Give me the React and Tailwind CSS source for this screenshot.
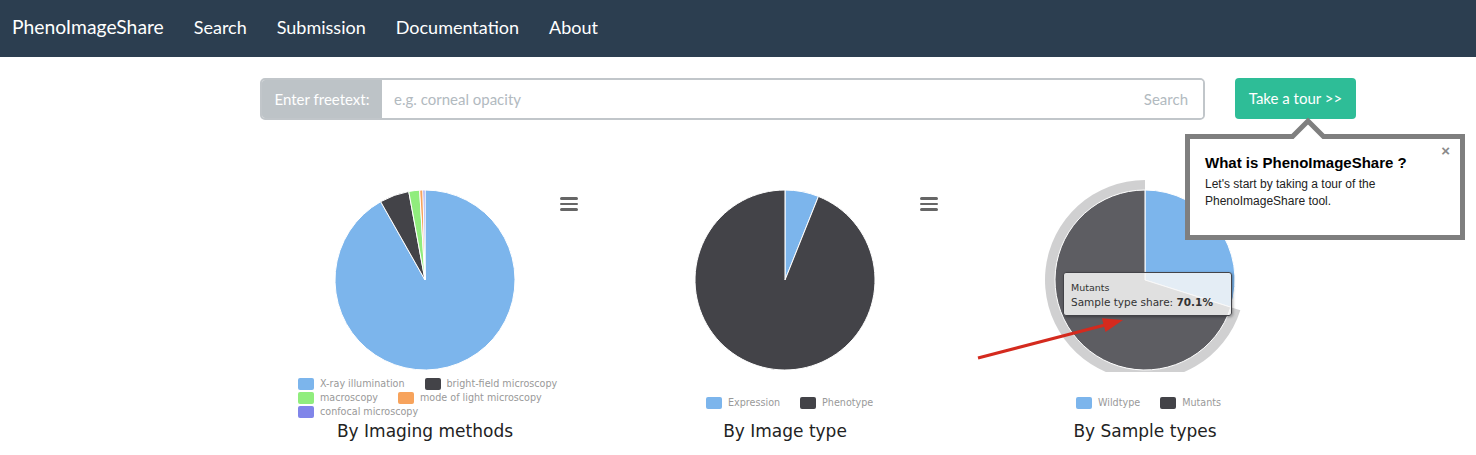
import React from 'react';

/* ── pie helpers ───────────────────────────────────────── */
const CX = 180;
const CY = 140;
const R = 90;

function pt(a, r) {
  const rad = (a * Math.PI) / 180;
  return [CX + r * Math.sin(rad), CY - r * Math.cos(rad)];
}

function slice(a0, a1, r = R) {
  const [x0, y0] = pt(a0, r);
  const [x1, y1] = pt(a1, r);
  const large = a1 - a0 > 180 ? 1 : 0;
  return `M${CX} ${CY} L${x0} ${y0} A${r} ${r} 0 ${large} 1 ${x1} ${y1} Z`;
}

function ring(a0, a1, r0, r1) {
  const [ax, ay] = pt(a0, r1);
  const [bx, by] = pt(a1, r1);
  const [cx, cy] = pt(a1, r0);
  const [dx, dy] = pt(a0, r0);
  const large = a1 - a0 > 180 ? 1 : 0;
  return `M${ax} ${ay} A${r1} ${r1} 0 ${large} 1 ${bx} ${by} L${cx} ${cy} A${r0} ${r0} 0 ${large} 0 ${dx} ${dy} Z`;
}

const BLUE = '#7cb5ec';
const DARK = '#434348';

const CHARTS = [
  {
    title: 'By Imaging methods',
    slices: [
      [0, 330.5, BLUE],
      [330.5, 349.6, DARK],
      [349.6, 356.6, '#90ed7d'],
      [356.6, 358.7, '#f7a35c'],
      [358.7, 359.99, '#8085e9'],
    ],
    legendPad: 'pt-[5px] pl-[53px]',
    legend: [
      [['X-ray illumination', BLUE], ['bright-field microscopy', DARK]],
      [['macroscopy', '#90ed7d'], ['mode of light microscopy', '#f7a35c']],
      [['confocal microscopy', '#8085e9']],
    ],
    menu: true,
  },
  {
    title: 'By Image type',
    slices: [
      [0, 21.8, BLUE],
      [21.8, 359.99, DARK],
    ],
    legendPad: 'pt-[24px] pl-[101px]',
    legend: [[['Expression', BLUE], ['Phenotype', DARK]]],
    menu: true,
  },
  {
    title: 'By Sample types',
    slices: [
      [0, 107.6, BLUE],
      [107.6, 359.99, '#5d5d62'],
    ],
    halo: [107.6, 359.99],
    legendPad: 'pt-[24px] pl-[111px]',
    legend: [[['Wildtype', BLUE], ['Mutants', DARK]]],
    menu: false,
  },
];

const NAV = ['Search', 'Submission', 'Documentation', 'About'];

function Hamburger() {
  return (
    <div className="absolute left-[315px] top-[57px] flex w-[18px] flex-col gap-[3px]">
      <span className="h-[2.5px] rounded-sm bg-[#666]" />
      <span className="h-[2.5px] rounded-sm bg-[#666]" />
      <span className="h-[2.5px] rounded-sm bg-[#666]" />
    </div>
  );
}

function Chart({ chart, children }) {
  return (
    <div className="relative flex w-[360px] flex-col" style={{ fontFamily: '"DejaVu Sans", Verdana, sans-serif' }}>
      <svg width="360" height="232" className="block">
        {chart.halo && (
          <path d={ring(chart.halo[0], chart.halo[1], R, 100)} fill={DARK} fillOpacity="0.25" />
        )}
        {chart.slices.map(([a0, a1, c], i) => (
          <path key={i} d={slice(a0, a1)} fill={c} stroke="#fff" strokeWidth="1" strokeLinejoin="round" />
        ))}
      </svg>

      {/* legend */}
      <div className={`flex h-[48px] flex-col ${chart.legendPad}`}>
        {chart.legend.map((row, i) => (
          <div key={i} className="flex h-[14px] items-center gap-x-[20px]">
            {row.map(([label, color]) => (
              <div key={label} className="flex items-center gap-[6px]">
                <span className="h-[12px] w-[16px] rounded-[2px]" style={{ background: color }} />
                <span className="text-[9.6px] leading-none text-[#999]">{label}</span>
              </div>
            ))}
          </div>
        ))}
      </div>

      <div className="text-center text-[17px] leading-[22px] text-[#222]">{chart.title}</div>

      {chart.menu && <Hamburger />}
      {children}
    </div>
  );
}

export default function App() {
  return (
    <div className="relative min-h-[455px] bg-white" style={{ fontFamily: 'Lato, "Open Sans", sans-serif' }}>
      {/* ── Navbar ── */}
      <nav className="flex h-[57px] items-center bg-[#2c3e50] pb-[2px] pl-[12px] text-[18px] text-white">
        <span className="mr-[30px] text-[19.3px]">PhenoImageShare</span>
        <div className="flex gap-[30px]">
          {NAV.map(n => (
            <span key={n}>{n}</span>
          ))}
        </div>
      </nav>

      {/* ── Search row ── */}
      <div className="mt-[21px] flex items-start pl-[260px]">
        <div className="flex h-[42px] w-[945px] overflow-hidden rounded-[5px] border-2 border-[#c1c6ca]">
          <div className="flex w-[120px] items-center justify-center bg-[#bdc3c7] text-[15px] text-white">
            Enter freetext:
          </div>
          <div className="flex flex-1 items-center justify-between bg-white pl-[12px] pr-[15px] text-[15px] text-[#b2babf]">
            <span>e.g. corneal opacity</span>
            <span>Search</span>
          </div>
        </div>

        <div className="relative ml-[30px]">
          <button className="h-[41px] w-[121px] rounded-[4px] bg-[#2ebd97] text-[15px] text-white">
            Take a tour &gt;&gt;
          </button>

          {/* tour popover */}
          <div className="absolute left-[-50px] top-[56px] z-20 h-[106px] w-[280px] border-[5px] border-[#7f7f7f] bg-white px-[15px] pt-[14px]" style={{ fontFamily: '"Liberation Sans", Arial, sans-serif' }}>
            <svg className="absolute left-[98px] top-[-22px]" width="40" height="22" viewBox="0 0 40 22">
              <path d="M2 22 L20 4 L38 22" fill="#fff" stroke="#7f7f7f" strokeWidth="5" />
            </svg>
            <span className="absolute right-[10px] top-[1px] text-[15px] font-bold text-[#8a8a8a]">×</span>
            <div className="text-[15px] font-bold leading-[20px] text-black">What is PhenoImageShare ?</div>
            <div className="mt-[3px] text-[12px] leading-[17px] text-[#222]">
              Let's start by taking a tour of the
              <br />
              PhenoImageShare tool.
            </div>
          </div>
        </div>
      </div>

      {/* ── Charts ── */}
      <div className="mt-[20px] flex pl-[245px]">
        <Chart chart={CHARTS[0]} />
        <Chart chart={CHARTS[1]} />
        <Chart chart={CHARTS[2]}>
          {/* hover tooltip */}
          <div className="absolute left-[98px] top-[132px] z-10 h-[44px] w-[169px] rounded-[3px] border border-[#434348] bg-[rgba(247,247,247,0.85)] px-[7px] pt-[9px] shadow-[1px_1px_3px_rgba(0,0,0,0.35)]">
            <div className="text-[9.5px] leading-[12px] text-[#333]">Mutants</div>
            <div className="text-[10.5px] leading-[16px] text-[#333]">
              Sample type share: <b>70.1%</b>
            </div>
          </div>
          {/* annotation arrow */}
          <svg className="absolute left-0 top-0 z-10" width="360" height="260">
            <line x1="13" y1="218" x2="140" y2="185" stroke="#d42a1e" strokeWidth="3" />
            <polygon points="158,180 140.5,191.9 136.9,178.3" fill="#d42a1e" />
          </svg>
        </Chart>
      </div>
    </div>
  );
}
